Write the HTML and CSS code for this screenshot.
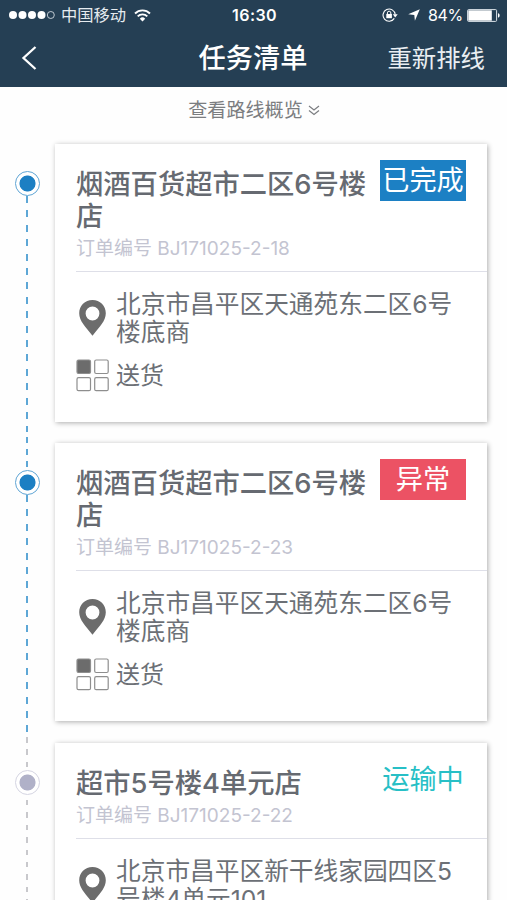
FILE: index.html
```html
<!DOCTYPE html>
<html lang="zh-CN">
<head>
  <meta charset="UTF-8">
  <meta name="viewport" content="width=device-width, initial-scale=1.0">
  <title>任务清单</title>
  <link rel="stylesheet" href="styles.css">
</head>
<body>

  <!-- Shared icons -->
  <svg class="sprite" width="0" height="0">
    <symbol id="pin" viewBox="0 0 27 36">
      <path fill="#6c6c6c" fill-rule="evenodd" d="M13.5 0C6 0 .2 5.900 .2 13.300c0 7.500 6.300 13.900 13.300 22.400 7-8.500 13.300-14.900 13.300-22.400C26.800 5.900 21 0 13.500 0zm0 6.600a6.900 6.900 0 1 1 0 13.800 6.900 6.900 0 0 1 0-13.800z"/>
    </symbol>
    <symbol id="grid" viewBox="0 0 33 33">
      <g fill="none" stroke="#8e8e8e" stroke-width="1.200">
        <rect x="1" y="1" width="13.500" height="13.500" rx="1.500" fill="#6c6c6c"/>
        <rect x="18.700" y="1" width="13.500" height="13.500" rx="1.500"/>
        <rect x="1" y="18.700" width="13.500" height="13" rx="1.500"/>
        <rect x="18.700" y="18.700" width="13.500" height="13" rx="1.500"/>
      </g>
    </symbol>
  </svg>

  <header class="header">
    <div class="status-bar">
      <div class="status-left">
        <svg class="signal" width="46" height="10" viewBox="0 0 46 10">
          <g fill="#fff">
            <circle cx="4" cy="5" r="4"/>
            <circle cx="13.500" cy="5" r="4"/>
            <circle cx="23" cy="5" r="4"/>
            <circle cx="32.500" cy="5" r="4"/>
          </g>
          <circle cx="41.800" cy="5" r="3.500" fill="none" stroke="#cfd8df" stroke-width=".9"/>
        </svg>
        <span class="carrier">中国移动</span>
        <svg width="17" height="13" viewBox="0 0 17 13" fill="none" stroke="#fff" stroke-width="1.900">
          <path d="M1 4.500a10.600 10.600 0 0 1 15 0"/>
          <path d="M3.700 7.400a6.800 6.800 0 0 1 9.600 0"/>
          <path d="M8.500 12.500L5.800 9.700a3.800 3.800 0 0 1 5.400 0z" fill="#fff" stroke="none"/>
        </svg>
      </div>
      <div class="clock">16:30</div>
      <div class="status-right">
        <svg width="16" height="14" viewBox="0 0 16 14">
          <path d="M12.300 10.400A6.100 6.100 0 1 1 13.200 6.500" fill="none" stroke="#fff" stroke-width="1.100"/>
          <path d="M10.800 6.300h4.900l-2.500 3.100z" fill="#fff"/>
          <rect x="4.300" y="6" width="5.600" height="4.200" fill="#fff"/>
          <path d="M5.400 6.200V4.900a1.700 1.700 0 0 1 3.400 0v1.300" fill="none" stroke="#fff" stroke-width="1"/>
        </svg>
        <svg class="location" width="12" height="12" viewBox="0 0 12 12">
          <path d="M11.800.2L6.900 11.800 6.300 5.900.2 5.300z" fill="#fff"/>
        </svg>
        <span class="percent">84%</span>
        <svg width="33" height="13" viewBox="0 0 33 13">
          <rect x=".6" y=".6" width="29" height="11.800" rx="1" fill="none" stroke="#dce3e8"/>
          <rect x="1.300" y="1.300" width="23.500" height="10.400" fill="#fff"/>
          <path d="M31 4.300c2.200.6 2.200 3.800 0 4.400z" fill="#fff"/>
        </svg>
      </div>
    </div>
    <div class="nav">
      <svg class="back" width="16" height="24" viewBox="0 0 16 24">
        <path d="M14.500 1L2.500 12l12 11" fill="none" stroke="#fff" stroke-width="2.300"/>
      </svg>
      <h1 class="nav-title">任务清单</h1>
      <a class="nav-action">重新排线</a>
    </div>
  </header>

  <div class="overview">
    <span>查看路线概览</span>
    <svg width="12" height="11" viewBox="0 0 12 11" fill="none" stroke="#7b7d80" stroke-width="1.200">
      <path d="M1 1l5 4 5-4M1 5.500l5 4 5-4"/>
    </svg>
  </div>

  <main class="timeline">
    <section class="task first">
      <div class="rail">
        <div class="line line-top"></div>
        <div class="dot"></div>
        <div class="line line-bottom"></div>
      </div>
      <div class="card">
        <div class="card-head">
          <div class="card-row">
            <h2 class="card-title">烟酒百货超市二区6号楼店</h2>
            <span class="tag tag-done">已完成</span>
          </div>
          <p class="order">订单编号 BJ171025-2-18</p>
        </div>
        <div class="address">
          <svg class="pin"><use href="#pin"/></svg>
          <p>北京市昌平区天通苑东二区6号楼底商</p>
        </div>
        <div class="delivery">
          <svg class="grid"><use href="#grid"/></svg>
          <p>送货</p>
        </div>
      </div>
    </section>

    <section class="task">
      <div class="rail">
        <div class="line line-top"></div>
        <div class="dot"></div>
        <div class="line line-bottom"></div>
      </div>
      <div class="card">
        <div class="card-head">
          <div class="card-row">
            <h2 class="card-title">烟酒百货超市二区6号楼店</h2>
            <span class="tag tag-error">异常</span>
          </div>
          <p class="order">订单编号 BJ171025-2-23</p>
        </div>
        <div class="address">
          <svg class="pin"><use href="#pin"/></svg>
          <p>北京市昌平区天通苑东二区6号楼底商</p>
        </div>
        <div class="delivery">
          <svg class="grid"><use href="#grid"/></svg>
          <p>送货</p>
        </div>
      </div>
    </section>

    <section class="task pending">
      <div class="rail">
        <div class="line line-top"></div>
        <div class="dot"></div>
        <div class="line line-bottom"></div>
      </div>
      <div class="card">
        <div class="card-head">
          <div class="card-row">
            <h2 class="card-title">超市5号楼4单元店</h2>
            <span class="tag tag-moving">运输中</span>
          </div>
          <p class="order">订单编号 BJ171025-2-22</p>
        </div>
        <div class="address">
          <svg class="pin"><use href="#pin"/></svg>
          <p>北京市昌平区新干线家园四区5号楼4单元101</p>
        </div>
      </div>
    </section>
  </main>

</body>
</html>
```

FILE: styles.css
```css
* {
  box-sizing: border-box;
}

body {
  margin: 0;
  height: 900px;
  overflow: hidden;
  background-color: #fefefe;
  color: #6c7076;
  font-family: Inter, "Noto Sans CJK SC", sans-serif;
}

h1, h2, p {
  margin: 0;
}

svg {
  display: block;
  flex-shrink: 0;
}

.sprite {
  display: none;
}

/* Header */
.header {
  height: 87px;
  background-color: #253f54;
  color: #fff;
}

.status-bar {
  display: grid;
  grid-template-columns: 1fr auto 1fr;
  align-items: center;
  height: 30px;
  padding: 0 7px 0 9px;
  font-size: 16px;
  line-height: 20px;
}

.status-left,
.status-right {
  display: flex;
  align-items: center;
}

.status-right {
  justify-content: flex-end;
}

.carrier {
  margin: 0 8px 0 6px;
  color: #e6ebef;
  font-size: 16.300px;
}

.clock {
  font-weight: 600;
  letter-spacing: 0.4px;
}

.location {
  margin: 0 8px 0 10px;
}

.percent {
  margin-right: 4px;
  letter-spacing: -0.3px;
}

.nav {
  display: grid;
  grid-template-columns: 1fr auto 1fr;
  align-items: center;
  height: 56px;
  padding: 0 22px 0 21px;
}

.nav-title {
  padding-top: 2px;
  font-size: 27.200px;
  font-weight: 500;
  line-height: 32px;
}

.nav-action {
  justify-self: end;
  color: #e9eef2;
  font-size: 24.400px;
  line-height: 32px;
}

/* Route overview link */
.overview {
  display: flex;
  justify-content: center;
  align-items: center;
  gap: 5px;
  height: 46px;
  padding-left: 1px;
  color: #7b7d80;
  font-size: 19.100px;
  line-height: 26px;
}

/* Timeline */
.task {
  display: flex;
  padding-right: 20px;
}

.rail {
  display: flex;
  flex-direction: column;
  align-items: center;
  width: 54px;
}

.line {
  width: 2px;
}

.line-top {
  height: 38px;
  background: repeating-linear-gradient(to bottom, transparent 0 5px, #5ea7d6 5px 11px, transparent 11px 12.200px);
}

.line-bottom {
  flex: 1;
  background: repeating-linear-gradient(to bottom, #5ea7d6 0 7px, transparent 7px 14.400px);
}

.first .line-top {
  visibility: hidden;
}

.dot {
  width: 25px;
  height: 25px;
  margin-left: 1px;
  border: 1.500px solid #5fa5d5;
  border-radius: 50%;
  background: radial-gradient(circle, #1c7fc3 0 7.600px, #fff 8.400px);
}

.pending .line-top,
.pending .line-bottom {
  background: repeating-linear-gradient(to bottom, transparent 0 5px, #c8c8cc 5px 10.500px, transparent 10.500px 12.400px);
}

.pending .dot {
  border-color: #d5d5e2;
  background: radial-gradient(circle, #b0b1c8 0 7.600px, #fff 8.400px);
}

/* Cards */
.card {
  flex: 1;
  margin: 11px 0 10.800px 1px;
  padding: 25px 0 29.500px 21px;
  background-color: #fff;
  box-shadow: 1px 1px 5px rgba(0, 0, 0, 0.32);
}

.card-head {
  padding-bottom: 10px;
  border-bottom: 1px solid #dedfe8;
}

.card-row {
  display: flex;
  justify-content: space-between;
  align-items: flex-start;
  padding-right: 21px;
}

.card-title {
  width: 297px;
  color: #666a71;
  font-size: 27.300px;
  font-weight: 500;
  line-height: 32px;
}

.tag {
  width: 86px;
  height: 41px;
  margin: -9px 0 0;
  font-size: 27.200px;
  line-height: 41px;
  text-align: center;
  white-space: nowrap;
}

.tag-done {
  background-color: #1c80c4;
  color: #fff;
}

.tag-error {
  background-color: #ec5264;
  color: #fff;
}

.tag-moving {
  color: #27bfc6;
}

.order {
  margin-top: 4px;
  color: #c3c4d1;
  font-size: 19px;
  line-height: 24px;
}

.address {
  display: flex;
  align-items: center;
  gap: 10px;
  padding: 18px 24px 0 3px;
  font-size: 24.700px;
  line-height: 28px;
}

.pin {
  width: 27px;
  height: 36px;
}

.delivery {
  display: flex;
  align-items: center;
  gap: 7px;
  margin-top: 13px;
  font-size: 24px;
  line-height: 32px;
}

.grid {
  width: 33px;
  height: 33px;
}
```
